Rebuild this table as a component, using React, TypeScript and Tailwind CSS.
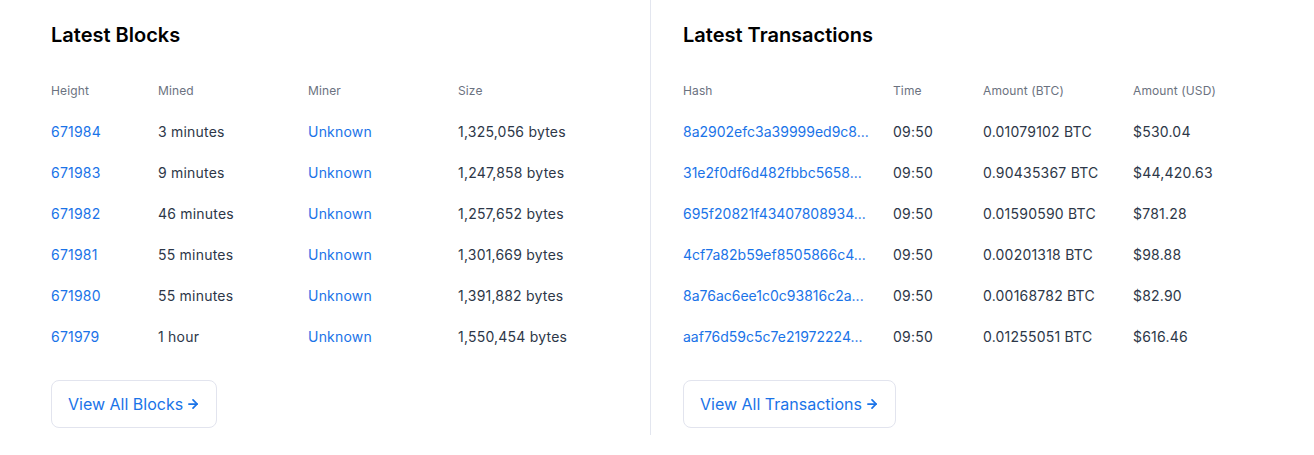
import { ArrowRight } from "lucide-react";

const blocks = [
  { height: "671984", mined: "3 minutes", miner: "Unknown", size: "1,325,056 bytes" },
  { height: "671983", mined: "9 minutes", miner: "Unknown", size: "1,247,858 bytes" },
  { height: "671982", mined: "46 minutes", miner: "Unknown", size: "1,257,652 bytes" },
  { height: "671981", mined: "55 minutes", miner: "Unknown", size: "1,301,669 bytes" },
  { height: "671980", mined: "55 minutes", miner: "Unknown", size: "1,391,882 bytes" },
  { height: "671979", mined: "1 hour", miner: "Unknown", size: "1,550,454 bytes" },
];

const txs = [
  { hash: "8a2902efc3a39999ed9c8...", time: "09:50", btc: "0.01079102 BTC", usd: "$530.04" },
  { hash: "31e2f0df6d482fbbc5658...", time: "09:50", btc: "0.90435367 BTC", usd: "$44,420.63" },
  { hash: "695f20821f43407808934...", time: "09:50", btc: "0.01590590 BTC", usd: "$781.28" },
  { hash: "4cf7a82b59ef8505866c4...", time: "09:50", btc: "0.00201318 BTC", usd: "$98.88" },
  { hash: "8a76ac6ee1c0c93816c2a...", time: "09:50", btc: "0.00168782 BTC", usd: "$82.90" },
  { hash: "aaf76d59c5c7e21972224...", time: "09:50", btc: "0.01255051 BTC", usd: "$616.46" },
];

function ViewAll({ label }: { label: string }) {
  return (
    <button className="mt-[23px] flex items-center gap-[3px] rounded-lg border border-[#e2e4ee] bg-white px-4 py-[11px] text-base leading-6 text-[#1a73e8]">
      {label}
      <ArrowRight size={14} strokeWidth={3} />
    </button>
  );
}

export default function App() {
  return (
    <div className="flex bg-white px-[19px] font-['Inter',sans-serif] antialiased">
      {/* Blocks */}
      <section className="w-[632px] border-r border-[#e3e6ef] pt-[21px] pb-[7px] pl-8">
        <h2 className="text-xl leading-7 font-semibold text-black">Latest Blocks</h2>
        <div className="mt-[21px]">
          <div className="grid h-[41px] grid-cols-[107px_150px_150px_1fr] items-center text-xs tracking-[0.01em] text-[#6b7280]">
            <span>Height</span>
            <span>Mined</span>
            <span>Miner</span>
            <span>Size</span>
          </div>
          {blocks.map((b) => (
            <div
              key={b.height}
              className="grid h-[41px] grid-cols-[107px_150px_150px_1fr] items-center text-sm tracking-[0.015em] text-[#2d3748]"
            >
              <a className="text-[#1a73e8]">{b.height}</a>
              <span>{b.mined}</span>
              <a className="text-[#1a73e8]">{b.miner}</a>
              <span>{b.size}</span>
            </div>
          ))}
        </div>
        <ViewAll label="View All Blocks" />
      </section>

      {/* Transactions */}
      <section className="flex-1 pt-[21px] pl-8">
        <h2 className="text-xl leading-7 font-semibold text-black">Latest Transactions</h2>
        <div className="mt-[21px]">
          <div className="grid h-[41px] grid-cols-[210px_90px_150px_1fr] items-center text-xs tracking-[0.01em] text-[#6b7280]">
            <span>Hash</span>
            <span>Time</span>
            <span>Amount (BTC)</span>
            <span>Amount (USD)</span>
          </div>
          {txs.map((t) => (
            <div
              key={t.hash}
              className="grid h-[41px] grid-cols-[210px_90px_150px_1fr] items-center text-sm tracking-[0.015em] text-[#2d3748]"
            >
              <a className="tracking-normal text-[#1a73e8]">{t.hash}</a>
              <span>{t.time}</span>
              <span>{t.btc}</span>
              <span>{t.usd}</span>
            </div>
          ))}
        </div>
        <ViewAll label="View All Transactions" />
      </section>
    </div>
  );
}
